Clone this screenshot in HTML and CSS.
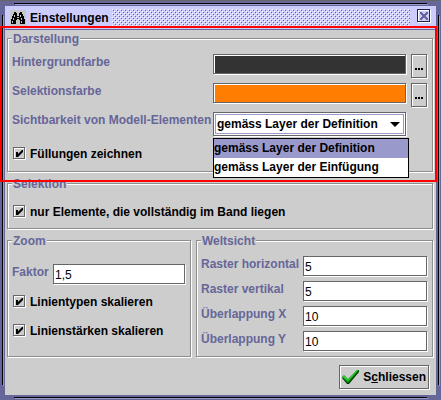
FILE: index.html
```html
<!DOCTYPE html>
<html lang="de">
<head>
    <meta charset="UTF-8">
    <meta name="viewport" content="width=device-width, initial-scale=1.0">
    <title>Einstellungen</title>
    <link rel="stylesheet" href="styles.css">
</head>
<body>
    <div class="window">
        <!-- title bar -->
        <header class="titlebar">
            <svg class="appIcon" width="16" height="16" viewBox="0 0 16 16" shape-rendering="crispEdges">
                <path d="M4 2h2v1h1v3h2V3h1V2h2v2h1v2h1v3h1v5h-5v-4H9V9H7v1H6v4H1V9h1V6h1V4h1z"/>
                <path fill="#c6c6c6" d="M4 5h1v2H4zM3 8h1v2H3zM2 11h1v2H2zM10 5h1v2h-1zM11 8h1v2h-1zM11 11h1v2h-1zM7 7h2v1H7z"/>
            </svg>
            <h1>Einstellungen</h1>
            <svg class="bumps" width="100%" height="18">
                <defs>
                    <pattern id="bump" width="4" height="4" patternUnits="userSpaceOnUse" shape-rendering="crispEdges">
                        <path fill="#fff" d="M0 0h1v1H0zM2 2h1v1H2z"/>
                        <path fill="#669" d="M1 1h1v1H1zM3 3h1v1H3z"/>
                    </pattern>
                </defs>
                <rect width="100%" height="18" fill="url(#bump)"/>
            </svg>
            <button class="close" type="button" aria-label="Schliessen">
                <svg width="8" height="8" viewBox="0 0 8 8" shape-rendering="crispEdges">
                    <path fill="#669" d="M0 0h2v1h1v1h2V1h1V0h2v2H7v1H6v2h1v1h1v2H6V7H5V6H3v1H2v1H0V6h1V5h1V3H1V2H0z"/>
                </svg>
            </button>
        </header>

        <form class="content">
            <fieldset class="display">
                <legend>Darstellung</legend>
                <label for="background">Hintergrundfarbe</label>
                <output class="swatch dark" id="background"></output>
                <button class="more" type="button" aria-label="Hintergrundfarbe wählen"><svg width="9" height="2"><path d="M0 0h2v2H0zM3 0h2v2H3zM6 0h2v2H6z"/></svg></button>
                <label for="selection">Selektionsfarbe</label>
                <output class="swatch orange" id="selection"></output>
                <button class="more" type="button" aria-label="Selektionsfarbe wählen"><svg width="9" height="2"><path d="M0 0h2v2H0zM3 0h2v2H3zM6 0h2v2H6z"/></svg></button>
                <label for="visibility">Sichtbarkeit von Modell-Elementen</label>
                <div class="combo">
                    <select id="visibility">
                        <option selected>gemäss Layer der Definition</option>
                        <option>gemäss Layer der Einfügung</option>
                    </select>
                    <ul class="popup" role="listbox">
                        <li class="active" role="option">gemäss Layer der Definition</li>
                        <li role="option">gemäss Layer der Einfügung</li>
                    </ul>
                </div>
                <label class="check"><input type="checkbox" checked>Füllungen zeichnen</label>
            </fieldset>

            <fieldset>
                <legend>Selektion</legend>
                <label class="check"><input type="checkbox" checked>nur Elemente, die vollständig im Band liegen</label>
            </fieldset>

            <div class="columns">
                <fieldset class="zoom">
                    <legend>Zoom</legend>
                    <label for="factor">Faktor</label>
                    <input type="text" id="factor" value="1,5">
                    <label class="check"><input type="checkbox" checked>Linientypen skalieren</label>
                    <label class="check"><input type="checkbox" checked>Linienstärken skalieren</label>
                </fieldset>

                <fieldset class="world">
                    <legend>Weltsicht</legend>
                    <label for="rasterH">Raster horizontal</label>
                    <input type="text" id="rasterH" value="5">
                    <label for="rasterV">Raster vertikal</label>
                    <input type="text" id="rasterV" value="5">
                    <label for="overlapX">Überlappung X</label>
                    <input type="text" id="overlapX" value="10">
                    <label for="overlapY">Überlappung Y</label>
                    <input type="text" id="overlapY" value="10">
                </fieldset>
            </div>

            <div class="actions">
                <button class="submit" type="button">
                    <svg width="17" height="16" viewBox="0 0 17 16">
                        <path fill="#003c00" d="M0 9l2-2 4 4L15 1h2v2L7 15H5z"/>
                        <path fill="#0a9c0a" d="M0 8l2-2 4 4 9-9h2L6 14z"/>
                        <path fill="#3ede3e" d="M1 8l1-1 4 4 9-10h1L6 12z"/>
                    </svg>
                    <span>S<u>c</u>hliessen</span>
                </button>
            </div>
        </form>
        <div class="marker"></div>
    </div>
</body>
</html>
```
FILE: styles.css
```css
*{
    box-sizing: border-box;
}
body{
    margin: 0;
    background: #669;
    font: bold 12px/16px "Liberation Sans", Arial, sans-serif;
    color: #000;
}
/* window frame, the black and light lines stop before the corners */
.window{
    position: relative;
    min-height: 100vh;
    display: flex;
    flex-direction: column;
    padding: 6px 5px 5px;
    background:
        linear-gradient(#666, #666) 0 0 / 100% 1px,
        linear-gradient(#000, #000) 14px 3px / calc(100% - 28px) 1px,
        linear-gradient(#99c, #99c) 15px 4px / calc(100% - 28px) 1px,
        linear-gradient(#000, #000) 14px calc(100% - 2px) / calc(100% - 28px) 1px,
        linear-gradient(#99c, #99c) 15px calc(100% - 1px) / calc(100% - 28px) 1px,
        linear-gradient(#000, #000) 2px 15px / 1px calc(100% - 30px),
        linear-gradient(#99c, #99c) 3px 16px / 1px calc(100% - 30px),
        linear-gradient(#000, #000) calc(100% - 2px) 15px / 1px calc(100% - 30px),
        linear-gradient(#99c, #99c) calc(100% - 1px) 16px / 1px calc(100% - 30px),
        #669;
    background-repeat: no-repeat;
}
.titlebar{
    display: flex;
    align-items: flex-start;
    height: 24px;
    padding: 3px 5px 0;
    background: #ccf;
    border-bottom: 1px solid #669;
}
.appIcon{
    flex: none;
    margin-top: 1px;
    background: #c6c6c6;
}
h1{
    margin: 0 3px 0 4px;
    font-size: 12px;
    line-height: 18px;
}
.bumps{
    flex: 1;
    min-width: 0;
}
.close{
    flex: none;
    width: 13px;
    height: 13px;
    margin: 0 1px 0 7px;
    padding: 2px;
    border: 1px solid #224;
    background: #ccf;
    box-shadow: 1px 1px 0 #fff, inset 1px 1px 0 #fff;
}
.close svg,.more svg,.submit svg{
    display: block;
}
.content{
    flex: 1;
    display: flex;
    flex-direction: column;
    gap: 3px;
    padding: 0 3px 5px 2px;
    background: #cdcdcd;
}
/* group boxes */
fieldset{
    min-width: 0;
    margin: 0;
    padding: 7px 4px 4px;
    border: 1px solid #8e8e8e;
    box-shadow: 1px 1px 0 #fff, inset 1px 1px 0 #fff;
}
legend{
    padding: 1px 1px 0;
    background: #cdcdcd;
}
label,legend{
    color: #669;
    white-space: nowrap;
}
.display,.zoom,.world{
    display: grid;
    gap: 4px;
}
.display{
    grid-template-columns: 197px 1fr 17px;
    padding-bottom: 5px;
}
.columns{
    display: grid;
    grid-template-columns: 184fr 237fr;
    gap: 5px;
}
.zoom{
    grid-template-columns: 37px 1fr;
    align-content: start;
    padding-top: 15px;
}
.world{
    grid-template-columns: 98px 1fr;
}
.check{
    grid-column: 1 / -1;
    display: flex;
    align-items: center;
    gap: 4px;
    height: 25px;
    color: #000;
}
/* controls */
.swatch,.more,.submit,select,input{
    margin: 0 1px 1px 0;
    border: 1px solid #666;
    border-radius: 0;
    box-shadow: 1px 1px 0 #fff, inset 1px 1px 0 #fff;
    font: inherit;
    color: #000;
}
.swatch{
    height: 20px;
}
.dark{
    background: #333;
}
.orange{
    background: #ff7d00;
}
.more{
    height: 24px;
    padding: 5px 3px 0;
    background: #cdcdcd;
}
input[type=text]{
    width: calc(100% - 1px);
    height: 20px;
    padding: 2px 1px 0;
    background: #fff;
    font-weight: normal;
}
input[type=checkbox]{
    appearance: none;
    flex: none;
    width: 12px;
    height: 12px;
    margin-left: 1px;
    background: #cdcdcd;
}
input[type=checkbox]:checked::before{
    content: "";
    display: block;
    width: 7px;
    height: 7px;
    margin: 2px;
    background: #000;
    clip-path: polygon(0 2px, 2px 2px, 2px 4px, 6px 0, 7px 0, 7px 2px, 2px 7px, 0 7px);
}
.combo{
    position: relative;
    height: 25px;
}
select{
    appearance: none;
    display: block;
    width: calc(100% - 1px);
    height: 24px;
    padding: 0 3px;
    background: #fff;
    outline: 1px solid #99c;
    outline-offset: -3px;
}
.combo::before{
    content: "";
    position: absolute;
    top: 10px;
    right: 7px;
    width: 10px;
    height: 5px;
    background: #000;
    clip-path: polygon(0 0, 100% 0, 50% 100%);
}
.popup{
    position: absolute;
    z-index: 1;
    top: 26px;
    left: 0;
    right: -2px;
    margin: 0;
    padding: 0;
    border: 1px solid #000;
    background: #fff;
    list-style: none;
    line-height: 19px;
    white-space: nowrap;
}
.active{
    background: #99c;
}
.actions{
    display: flex;
    justify-content: flex-end;
    padding: 5px 3px 0;
}
.submit{
    display: flex;
    align-items: center;
    gap: 4px;
    height: 24px;
    margin-right: 1px;
    padding: 0 2px;
    background: #cdcdcd;
}
/* red frame round the display settings */
.marker{
    position: absolute;
    z-index: 2;
    top: 26px;
    left: 0;
    right: 4px;
    height: 156px;
    border: 2px solid #f00;
    pointer-events: none;
}
```
